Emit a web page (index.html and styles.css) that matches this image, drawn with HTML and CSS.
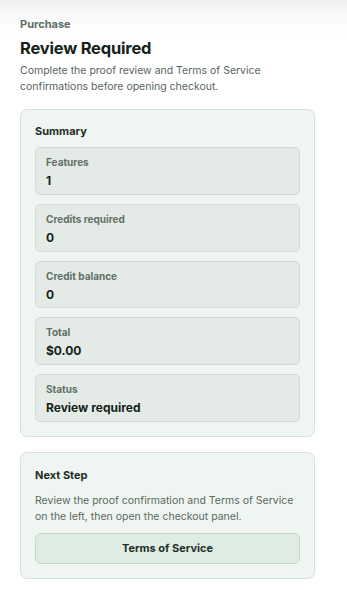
FILE: index.html
```html
<!DOCTYPE html>
<html lang="en">
<head>
<meta charset="utf-8">
<title>Purchase</title>
<link rel="stylesheet" href="styles.css">
</head>
<body>
<div class="page">
  <header class="head">
    <div class="eyebrow">Purchase</div>
    <h1 class="title">Review Required</h1>
    <p class="desc">Complete the proof review and Terms of Service confirmations before opening checkout.</p>
  </header>
  <section class="card">
    <h2 class="card-title">Summary</h2>
    <div class="items">
      <div class="item"><div class="label">Features</div><div class="value">1</div></div>
      <div class="item"><div class="label">Credits required</div><div class="value">0</div></div>
      <div class="item"><div class="label">Credit balance</div><div class="value">0</div></div>
      <div class="item"><div class="label">Total</div><div class="value">$0.00</div></div>
      <div class="item"><div class="label">Status</div><div class="value">Review required</div></div>
    </div>
  </section>
  <section class="card next">
    <h2 class="card-title">Next Step</h2>
    <p class="card-desc">Review the proof confirmation and Terms of Service on the left, then open the checkout panel.</p>
    <button class="btn" type="button">Terms of Service</button>
  </section>
</div>
</body>
</html>
```
FILE: styles.css
```css
html, body {
  margin: 0;
  padding: 0;
}
body {
  font-family: Inter, "Noto Sans", sans-serif;
  background: #fff;
  color: #17271e;
  width: 347px;
  height: 590px;
  overflow: hidden;
  background-image: linear-gradient(to bottom, #eeeeee 0px, #f9f9f9 14px, #ffffff 34px);
}
.page {
  padding: 17px 32px 0 20px;
  display: flex;
  flex-direction: column;
}
.head {
  display: flex;
  flex-direction: column;
}
.eyebrow {
  font-size: 11px;
  font-weight: 700;
  color: #5d6e65;
  line-height: 14px;
}
.title {
  margin: 6px 0 0;
  font-size: 16.5px;
  line-height: 22px;
  font-weight: 700;
  color: #142219;
  letter-spacing: -0.2px;
}
.desc {
  margin: 4px 0 0;
  font-size: 10.5px;
  line-height: 16px;
  color: #58655e;
}
.card {
  margin-top: 14px;
  background: #eff5f1;
  border: 1px solid #d8e2dc;
  border-radius: 7px;
  padding: 13px 14px 14px;
}
.card-title {
  margin: 0;
  font-size: 11px;
  line-height: 16px;
  font-weight: 700;
  color: #1f2e25;
}
.items {
  margin-top: 8px;
  display: flex;
  flex-direction: column;
  gap: 9px;
}
.item {
  background: #e4ebe6;
  border: 1px solid #d2dbd5;
  border-radius: 5px;
  padding: 8px 10px 7px;
  box-sizing: border-box;
  height: 47.75px;
}
.label {
  font-size: 10px;
  line-height: 13px;
  font-weight: 700;
  color: #607066;
}
.value {
  margin-top: 4px;
  font-size: 12px;
  line-height: 16px;
  font-weight: 700;
  color: #142219;
}
.next {
  margin-top: 15px;
  padding-top: 14px;
}
.card-desc {
  margin: 10px 0 0;
  font-size: 10.5px;
  line-height: 16px;
  color: #5d6962;
}
.btn {
  margin-top: 8px;
  width: 100%;
  height: 31px;
  background: #dfece4;
  border: 1px solid #c6d6cc;
  border-radius: 6px;
  font-family: inherit;
  font-size: 11px;
  font-weight: 700;
  color: #1e3026;
  cursor: pointer;
}
```
